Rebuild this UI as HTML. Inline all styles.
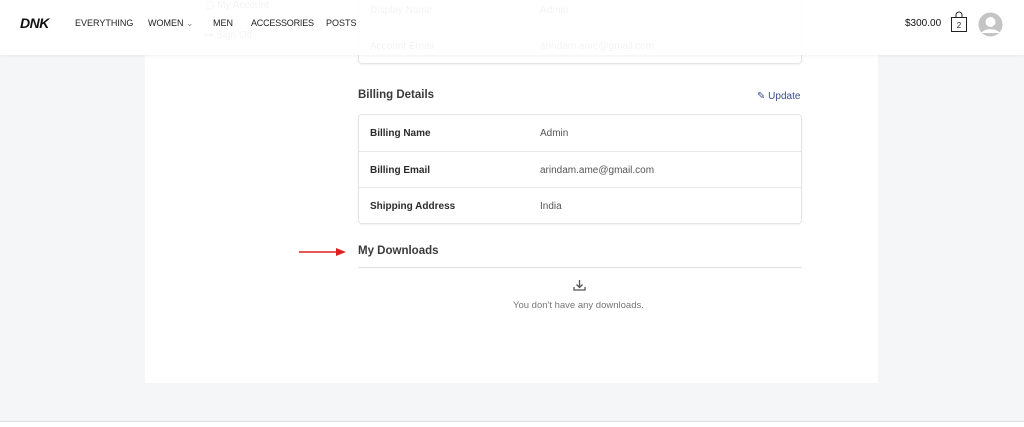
<!DOCTYPE html>
<html><head><style>
*{margin:0;padding:0;box-sizing:border-box}
body{width:1024px;height:427px;overflow:hidden;background:#f5f6f8;font-family:"Liberation Sans",Arial,sans-serif;position:relative}
.card{position:absolute;left:145px;top:0;width:733px;height:383px;background:#fff}
.abs{position:absolute}
.box{position:absolute;left:358px;width:444px;border:1px solid #e3e5e8;border-radius:4px;background:#fff;box-shadow:0 1px 2px rgba(0,0,0,.06)}
.row{height:36.5px;border-bottom:1px solid #e6e8eb;position:relative;font-size:10px;color:#555}
.row:last-child{border-bottom:none}
.row b{position:absolute;left:11px;top:13px;color:#2b2b2b;font-size:10px}
.row span{position:absolute;left:181px;top:13px}
.hdr{position:absolute;left:0;top:0;width:1024px;height:55px;background:rgba(255,255,255,.93);box-shadow:0 1px 3px rgba(0,0,0,.06)}
.nav{position:absolute;top:18px;font-size:9px;color:#222}
.ghost{color:#555;font-size:10px}
</style></head><body>
<div class="card"></div>
<div class="abs ghost" style="left:205px;top:0">▢ My Account</div>
<div class="abs ghost" style="left:205px;top:30px">↦ Sign Off</div>
<div class="box" style="top:-10px;height:74px">
 <div class="abs ghost" style="left:11px;top:14px">Display Name</div>
 <div class="abs ghost" style="left:181px;top:14px">Admin</div>
 <div class="abs ghost" style="left:11px;top:50px">Account Email</div>
 <div class="abs ghost" style="left:181px;top:50px">arindam.ame@gmail.com</div>
</div>
<div class="abs" style="left:358px;top:89px;font-size:11.5px;font-weight:bold;color:#3a3a3a">Billing Details</div>
<div class="abs" style="left:757px;top:91px;font-size:10px;color:#3c4f8a">✎ Update</div>
<div class="box" style="top:114px;height:110px">
 <div class="row"><b>Billing Name</b><span>Admin</span></div>
 <div class="row"><b>Billing Email</b><span>arindam.ame@gmail.com</span></div>
 <div class="row"><b>Shipping Address</b><span>India</span></div>
</div>
<svg class="abs" style="left:298px;top:247px" width="50" height="10"><line x1="1" y1="5" x2="40" y2="5" stroke="#e02020" stroke-width="1.6"/><path d="M38 1 L48 5 L38 9 Z" fill="#e02020"/></svg>
<div class="abs" style="left:358px;top:245px;font-size:11.5px;font-weight:bold;color:#3a3a3a">My Downloads</div>
<div class="abs" style="left:358px;top:267px;width:444px;height:1px;background:#dfe1e4"></div>
<svg class="abs" style="left:573px;top:279px" width="13" height="12" fill="none" stroke="#555" stroke-width="1.3"><path d="M6.5 1v7M3.5 5.5l3 3 3-3M1 8v3h11V8"/></svg>
<div class="abs" style="left:513px;top:300px;font-size:9.5px;color:#777">You don't have any downloads.</div>
<div class="abs" style="left:0;top:421px;width:1024px;height:1px;background:#dcdde0"></div>
<div class="abs" style="left:0;top:422px;width:1024px;height:5px;background:#fff"></div>
<div class="hdr">
 <div class="abs" style="left:20px;top:15px;font-size:14px;font-weight:900;font-style:italic;color:#111;letter-spacing:-0.5px">DNK</div>
 <div class="nav" style="left:75px">EVERYTHING</div>
 <div class="nav" style="left:148px">WOMEN <span style="color:#888">⌄</span></div>
 <div class="nav" style="left:213px">MEN</div>
 <div class="nav" style="left:251px;letter-spacing:-0.2px">ACCESSORIES</div>
 <div class="nav" style="left:326px">POSTS</div>
 <div class="nav" style="left:905px;top:18px;font-size:10px;color:#111">$300.00</div>
 <svg class="abs" style="left:949px;top:10px" width="20" height="24"><path d="M7 8V5a3 3 0 0 1 6 0v3" fill="none" stroke="#222"/><rect x="2.5" y="7.5" width="15" height="14" fill="none" stroke="#222"/><text x="10" y="18" font-size="8" text-anchor="middle" font-family="Liberation Sans" fill="#222">2</text></svg>
 <svg class="abs" style="left:978px;top:12px" width="25" height="25"><circle cx="12.5" cy="12.5" r="12" fill="#c4c4c4"/><circle cx="12.5" cy="10" r="5" fill="#fff"/><path d="M3.5 21c2-5 16-5 18 0" fill="#fff"/></svg>
</div>
</body></html>
